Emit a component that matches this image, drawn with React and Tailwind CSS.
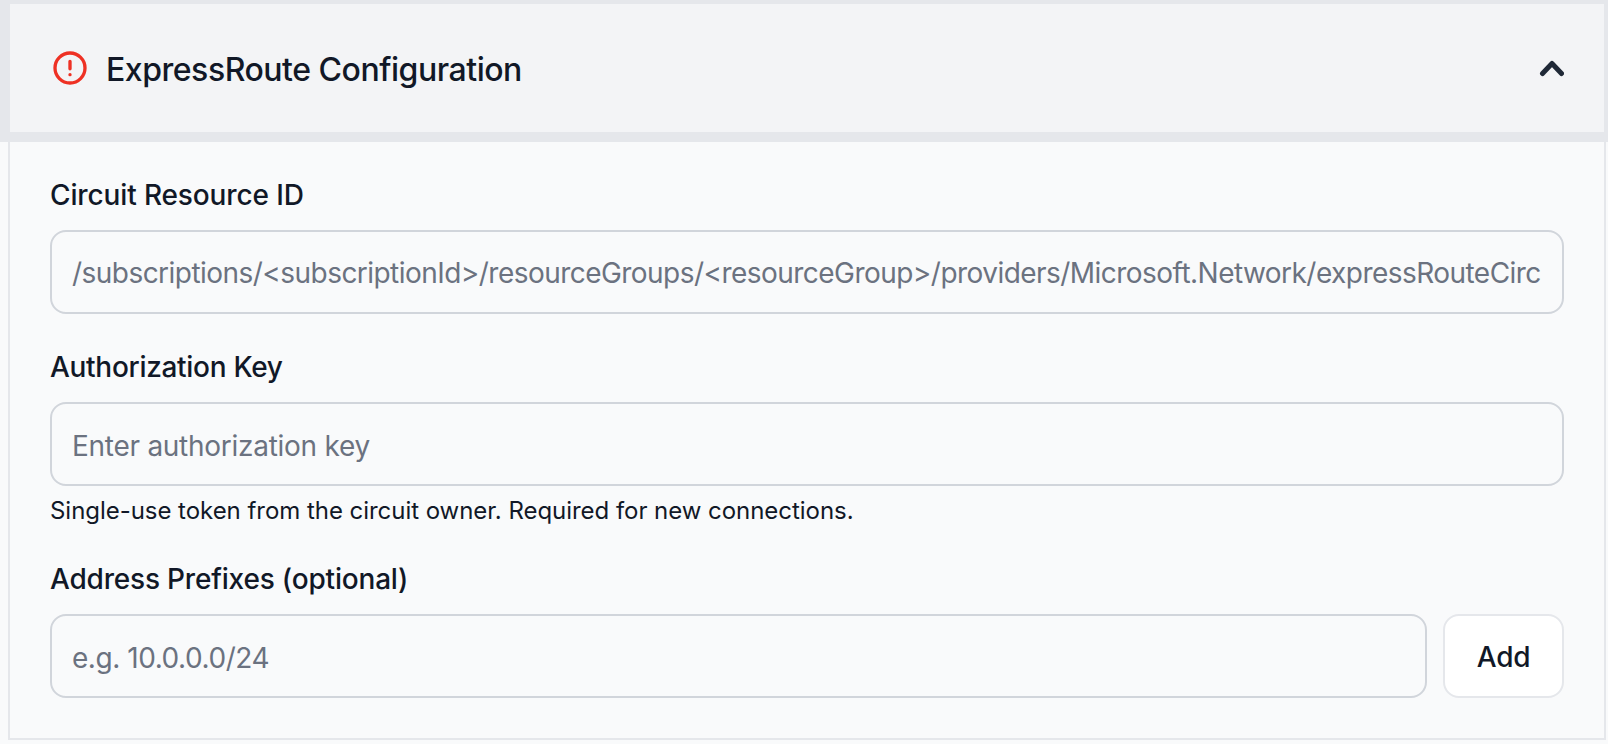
function Field({ label, labelClass, placeholder, inputClass, help }) {
  return (
    <div className="flex flex-col">
      <label className={`text-[28px] leading-[42px] font-medium text-[#111827] mb-[14px] ${labelClass}`}>{label}</label>
      <input
        readOnly
        placeholder={placeholder}
        className={`w-full h-[84px] rounded-2xl border-2 border-[#d1d5db] bg-transparent px-5 text-[28px] placeholder:text-[#6b7280] outline-none ${inputClass}`}
      />
      {help && <p className="mt-2 -mb-0.5 text-2xl leading-[34px] tracking-[-0.04px] text-[#111827]">{help}</p>}
    </div>
  );
}

export default function App() {
  return (
    <div className="w-[1608px] h-[744px] bg-[#f9fafb] overflow-hidden font-['Inter',sans-serif]">
      <div className="h-[142px] bg-[#f3f4f6] border-[#e5e7eb] border-t-4 border-l-[10px] border-r-4 border-b-[10px] flex items-center justify-between pl-10 pr-10">
        <div className="flex items-center gap-4">
          <svg width="40" height="40" viewBox="0 0 24 24" fill="none" stroke="#ee3124" strokeWidth="2" strokeLinecap="round" strokeLinejoin="round">
            <circle cx="12" cy="12" r="9" />
            <path d="M12 8v4.5m0 3.5h.01" />
          </svg>
          <h2 className="text-[32px] leading-[48px] pt-[3px] font-medium tracking-[-0.47px] text-[#111827]">ExpressRoute Configuration</h2>
        </div>
        <svg width="28" height="20" viewBox="0 0 28 20" fill="none" stroke="#1f2937" strokeWidth="5" strokeLinecap="round" strokeLinejoin="round">
          <path d="M6.5 15.5 16 5.5l9.5 10" />
        </svg>
      </div>
      <div className="ml-2 mr-0.5 h-[598px] border-2 border-t-0 border-[#e5e7eb] px-10 pt-8 pb-10 flex flex-col gap-8">
        <Field
          label="Circuit Resource ID"
          labelClass="tracking-[-0.13px]"
          inputClass="pt-[1px] tracking-[-0.54px]"
          placeholder="/subscriptions/<subscriptionId>/resourceGroups/<resourceGroup>/providers/Microsoft.Network/expressRouteCircuits/<circuitName>"
        />
        <Field
          label="Authorization Key"
          labelClass="tracking-[-0.3px]"
          inputClass="pt-[3px] tracking-[-0.27px]"
          placeholder="Enter authorization key"
          help="Single-use token from the circuit owner. Required for new connections."
        />
        <div className="flex flex-col">
          <label className="text-[28px] leading-[42px] font-medium tracking-[-0.19px] text-[#111827] mb-[14px]">Address Prefixes (optional)</label>
          <div className="flex gap-4">
            <input
              readOnly
              placeholder="e.g. 10.0.0.0/24"
              className="flex-1 min-w-0 h-[84px] rounded-2xl border-2 border-[#d1d5db] bg-transparent px-5 pt-[3px] text-[28px] tracking-[-0.45px] placeholder:text-[#6b7280] outline-none"
            />
            <button className="w-[121px] h-[84px] rounded-2xl border-2 border-[#e5e7eb] bg-white pt-0.5 text-[28px] font-medium tracking-[-0.3px] text-[#111827]">Add</button>
          </div>
        </div>
      </div>
    </div>
  );
}
